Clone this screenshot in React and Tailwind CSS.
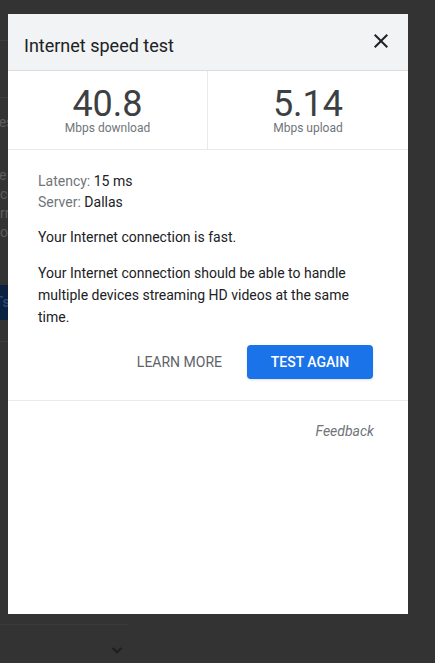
const CloseIcon = () => (
    <svg viewBox="0 0 24 24" className="w-6 h-6" fill="#202124">
        <path d="M19 6.41L17.59 5 12 10.59 6.41 5 5 6.41 10.59 12 5 17.59 6.41 19 12 13.41 17.59 19 19 17.59 13.41 12z" />
    </svg>
);

const Stat = ({ value, label, divider }) => (
    <div className={`flex flex-col items-center pt-[18px] ${divider ? 'border-r border-[#e8eaed]' : ''}`}>
        <div className="text-[36px] leading-[30px] text-[#3c4043]">{value}</div>
        <div className="text-[12px] leading-4 mt-[1px] text-[#70757a]">{label}</div>
    </div>
);

const App = () => {
    return (
        <div
            className="relative w-[435px] h-[663px] bg-[#333333] overflow-hidden"
            style={{ fontFamily: 'Roboto, "Noto Sans", sans-serif' }}
        >
            {/* page behind the overlay */}
            <div className="w-[128px] h-full flex flex-col text-[14px] text-[#5c5c5c]">
                <div className="h-[41px] border-b border-[#3d3d3d] shrink-0" />
                <div className="h-[57px] border-b border-[#3d3d3d] shrink-0" />
                <div className="mt-[14px] leading-5 whitespace-nowrap -ml-[9px]">Test speed</div>
                <div className="mt-[34px] flex flex-col leading-[19px] whitespace-nowrap">
                    <span className="-ml-[1px]">e speed</span>
                    <span>connect</span>
                    <span>rrent</span>
                    <span>o</span>
                </div>
                <div className="mt-[43px] h-[35px] bg-[#0a2242] text-[#2b4a73] text-[15px] font-medium leading-[35px] whitespace-nowrap shrink-0">
                    <span className="-ml-[6px]">Ts</span>
                </div>
                <div className="mt-[21px] border-b border-[#3d3d3d]" />
                <div className="flex-1" />
                <div className="border-b border-[#3b3b3b] mb-[17px]" />
                <div className="flex justify-end pr-[3px] mb-[5px]">
                    <svg viewBox="0 0 24 24" className="w-[16px] h-[16px]" fill="none" stroke="#1f1f1f" strokeWidth="3.5">
                        <path d="M5.5 9l6.5 6.5 6.5-6.5" />
                    </svg>
                </div>
            </div>

            {/* dialog */}
            <div className="absolute left-[8px] top-[14px] w-[400px] h-[600px] bg-white flex flex-col">
                <div className="h-[57px] bg-[#f1f3f4] border-b border-[#dadce0] flex justify-between pl-4 pr-[15px] shrink-0">
                    <h2 className="mt-[20px] text-[18px] leading-6 text-[#202124]">Internet speed test</h2>
                    <button className="mt-[15px] h-6">
                        <CloseIcon />
                    </button>
                </div>

                <div className="grid grid-cols-2 h-[79px] border-b border-[#e8eaed] shrink-0">
                    <Stat value="40.8" label="Mbps download" divider />
                    <Stat value="5.14" label="Mbps upload" />
                </div>

                <div className="px-[30px] pt-[21px] text-[14px] text-[#202124]">
                    <div className="leading-[21px]">
                        <span className="text-[#70757a]">Latency:</span> 15 ms
                    </div>
                    <div className="leading-[21px]">
                        <span className="text-[#70757a]">Server:</span> Dallas
                    </div>
                    <p className="mt-[13px] leading-[22px]">Your Internet connection is fast.</p>
                    <p className="mt-[14px] leading-[22px]">
                        Your Internet connection should be able to handle multiple devices streaming HD videos at the same time.
                    </p>
                    <div className="mt-[17px] flex justify-end items-center pr-[5px]">
                        <button className="mr-[25px] text-[14px] text-[#5f6368] uppercase">Learn more</button>
                        <button className="w-[126px] h-[34px] rounded-[4px] bg-[#1a73e8] text-white text-[14px] font-medium uppercase shadow-sm">
                            Test again
                        </button>
                    </div>
                </div>

                <div className="mt-[21px] border-t border-[#e8eaed] pt-[18px] pr-[34px] text-right">
                    <span className="text-[14px] leading-5 italic text-[#70757a]">Feedback</span>
                </div>
            </div>
        </div>
    );
};

export default App;
